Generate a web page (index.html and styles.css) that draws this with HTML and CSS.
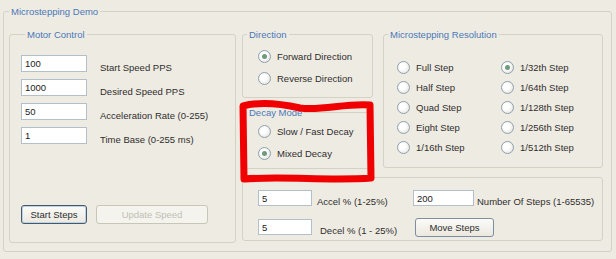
FILE: index.html
```html
<!DOCTYPE html>
<html lang="en">
<head>
    <meta charset="UTF-8">
    <title>Microstepping Demo</title>
    <link rel="stylesheet" href="styles.css">
</head>
<body>
    <div class="screen">
        <fieldset class="group demo">
            <legend class="group-title">Microstepping Demo</legend>
            <div class="demo-body">

                <fieldset class="group motor">
                    <legend class="group-title">Motor Control</legend>
                    <div class="motor-rows">
                        <div class="field-row">
                            <input type="text" class="text-box" value="100">
                            <span class="field-label">Start Speed PPS</span>
                        </div>
                        <div class="field-row">
                            <input type="text" class="text-box" value="1000">
                            <span class="field-label">Desired Speed PPS</span>
                        </div>
                        <div class="field-row">
                            <input type="text" class="text-box" value="50">
                            <span class="field-label">Acceleration Rate (0-255)</span>
                        </div>
                        <div class="field-row">
                            <input type="text" class="text-box" value="1">
                            <span class="field-label">Time Base (0-255 ms)</span>
                        </div>
                    </div>
                    <div class="button-row">
                        <button type="button" class="btn btn-default start-btn">Start Steps</button>
                        <button type="button" class="btn update-btn" disabled>Update Speed</button>
                    </div>
                </fieldset>

                <div class="right-col">
                    <div class="top-row">
                        <div class="stack">
                            <fieldset class="group direction">
                                <legend class="group-title">Direction</legend>
                                <div class="radio-list">
                                    <div class="radio-row"><span class="radio checked"></span>Forward Direction</div>
                                    <div class="radio-row"><span class="radio"></span>Reverse Direction</div>
                                </div>
                            </fieldset>
                            <fieldset class="group decay">
                                <legend class="group-title">Decay Mode</legend>
                                <div class="radio-list">
                                    <div class="radio-row"><span class="radio"></span>Slow / Fast Decay</div>
                                    <div class="radio-row"><span class="radio checked"></span>Mixed Decay</div>
                                </div>
                            </fieldset>
                        </div>

                        <fieldset class="group resolution">
                            <legend class="group-title">Microstepping Resolution</legend>
                            <div class="resolution-grid">
                                <div class="radio-row"><span class="radio"></span>Full Step</div>
                                <div class="radio-row"><span class="radio checked"></span>1/32th Step</div>
                                <div class="radio-row"><span class="radio"></span>Half Step</div>
                                <div class="radio-row"><span class="radio"></span>1/64th Step</div>
                                <div class="radio-row"><span class="radio"></span>Quad Step</div>
                                <div class="radio-row"><span class="radio"></span>1/128th Step</div>
                                <div class="radio-row"><span class="radio"></span>Eight Step</div>
                                <div class="radio-row"><span class="radio"></span>1/256th Step</div>
                                <div class="radio-row"><span class="radio"></span>1/16th Step</div>
                                <div class="radio-row"><span class="radio"></span>1/512th Step</div>
                            </div>
                        </fieldset>
                    </div>

                    <fieldset class="group move">
                        <div class="move-grid">
                            <input type="text" class="text-box small-box" value="5">
                            <span class="field-label accel-label">Accel % (1-25%)</span>
                            <input type="text" class="text-box steps-box" value="200">
                            <span class="field-label">Number Of Steps (1-65535)</span>

                            <input type="text" class="text-box small-box" value="5">
                            <span class="field-label decel-label">Decel % (1 - 25%)</span>
                            <button type="button" class="btn move-btn">Move Steps</button>
                        </div>
                    </fieldset>
                </div>

            </div>
        </fieldset>

        <!-- red marker drawn over the decay mode box -->
        <svg class="annotation" viewBox="0 0 616 259" width="616" height="259">
            <path d="M243,106 C262,101 282,104 300,108 C322,111 345,103 370,105 L371,178 C332,181 282,176 244,179 Z"
                  fill="none" stroke="#f00000" stroke-width="7" stroke-linejoin="round"/>
        </svg>
    </div>
</body>
</html>
```

FILE: styles.css
```css
/* Base */
* {
    box-sizing: border-box;
}

body {
    margin: 0;
    background: #eeebe2;
    font-family: 'Liberation Sans', Arial, sans-serif;
    font-size: 9.5px;
    color: #2e2e2e;
}

.screen {
    position: relative;
    width: 616px;
    height: 259px;
    overflow: hidden;
}

/* Group boxes */
.group {
    margin: 0;
    padding: 0;
    min-width: 0;
    border: 1px solid #d4d1c5;
    border-radius: 3px;
}

.group-title {
    margin-left: 4px;
    padding: 0 2px;
    line-height: 13px;
    color: #4a78b8;
}

.demo {
    margin: 5px 4px 0 3px;
    width: 609px;
    height: 247px;
}

.demo > .group-title {
    margin-left: 5px;
}

.demo-body {
    display: flex;
    gap: 6px;
    padding: 10px 0 0 5px;
}

/* Motor control */
.motor {
    width: 227px;
    height: 215px;
    padding: 14px 0 0 11px;
}

.motor-rows {
    display: flex;
    flex-direction: column;
    gap: 5px;
}

.field-row {
    display: flex;
    align-items: flex-start;
    gap: 13px;
}

.field-label {
    margin-top: 6px;
    line-height: 13px;
    white-space: nowrap;
}

.text-box {
    width: 66px;
    height: 17px;
    padding: 0 3px;
    border: 1px solid #b3c0cb;
    background: #fff;
    font: inherit;
    color: #222;
    outline: none;
}

.button-row {
    display: flex;
    gap: 9px;
    margin-top: 59px;
}

/* Buttons */
.btn {
    height: 19px;
    padding: 0;
    border: 1px solid #c9c6b8;
    border-radius: 3px;
    background: linear-gradient(#fbfbf8, #ebe8df);
    font: inherit;
    color: #2e2e2e;
}

.btn-default {
    border-color: #44596b;
    box-shadow: inset 0 0 0 1px #bcd2e6;
}

.btn:disabled {
    background: #f4f3ee;
    color: #c2bfb3;
}

.start-btn {
    width: 66px;
}

.update-btn {
    width: 112px;
}

.move-btn {
    width: 79px;
    border-color: #7d8f9e;
}

/* Right column */
.right-col {
    width: 361px;
}

.top-row {
    display: flex;
    gap: 10px;
}

.stack {
    width: 131px;
}

.direction {
    height: 70px;
    padding-top: 4px;
}

.decay {
    height: 63px;
    margin-top: 8px;
    padding-top: 1px;
}

.radio-list {
    padding-left: 15px;
}

.radio-row {
    display: flex;
    align-items: center;
    gap: 6px;
    height: 22px;
    white-space: nowrap;
}

.radio {
    flex: none;
    position: relative;
    width: 13px;
    height: 13px;
    border: 1px solid #8ea0b0;
    border-radius: 50%;
    background: radial-gradient(circle at 40% 40%, #ffffff 30%, #dcdbd3 100%);
}

.radio.checked::after {
    content: "";
    position: absolute;
    left: 3px;
    top: 3px;
    width: 5px;
    height: 5px;
    border-radius: 50%;
    background: #6e9a7c;
}

.resolution {
    width: 220px;
    height: 140px;
}

.resolution-grid {
    display: grid;
    grid-template-columns: 104px auto;
    padding: 16px 0 0 13px;
}

.resolution-grid .radio-row {
    height: 20px;
}

/* Move steps */
.move {
    height: 64px;
    margin-top: 8px;
    padding: 12px 0 0 15px;
}

.move-grid {
    display: grid;
    grid-template-columns: 54px 101px 64px auto;
    row-gap: 11px;
    align-items: start;
}

.small-box {
    width: 54px;
    height: 16px;
}

.steps-box {
    width: 61px;
    height: 16px;
}

.accel-label {
    padding-left: 5px;
}

.decel-label {
    padding-left: 8px;
}

.move-grid .field-label {
    margin-top: 5px;
}

.move-btn {
    grid-column: 3 / 5;
    margin: -1px 0 0 2px;
}

/* Annotation overlay */
.annotation {
    position: absolute;
    left: 0;
    top: 0;
    pointer-events: none;
}
```
